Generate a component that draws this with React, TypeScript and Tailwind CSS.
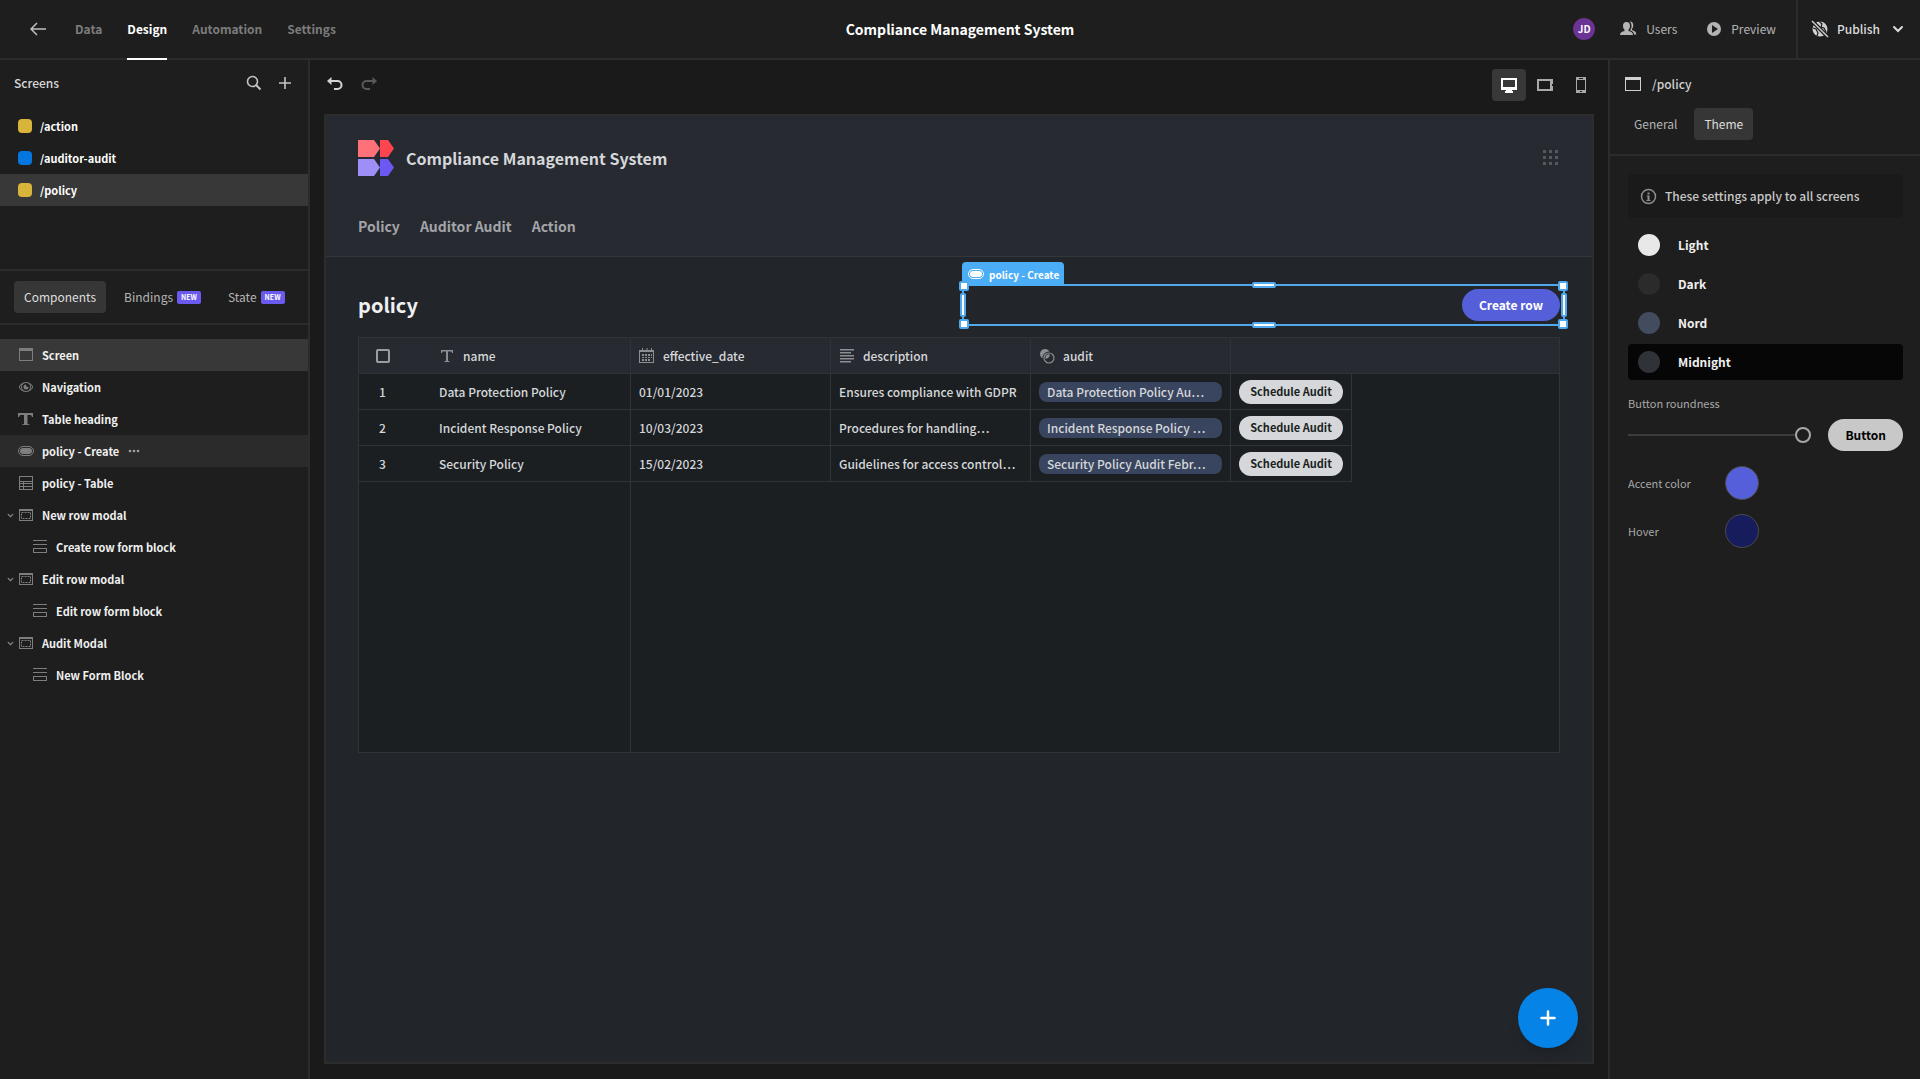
import type { ReactNode } from "react"

const screens = [
  { path: "/action", color: "bg-[#d9b43b]", active: false },
  { path: "/auditor-audit", color: "bg-[#0476e0]", active: false },
  { path: "/policy", color: "bg-[#d9b43b]", active: true },
]

const components = [
  { name: "Screen", icon: "screen", row: "bg-[#383838]" },
  { name: "Navigation", icon: "eye" },
  { name: "Table heading", icon: "text" },
  { name: "policy - Create", icon: "button", row: "bg-[#2b2b2b]", menu: true },
  { name: "policy - Table", icon: "table" },
  { name: "New row modal", icon: "modal", open: true },
  { name: "Create row form block", icon: "form", child: true },
  { name: "Edit row modal", icon: "modal", open: true },
  { name: "Edit row form block", icon: "form", child: true },
  { name: "Audit Modal", icon: "modal", open: true },
  { name: "New Form Block", icon: "form", child: true },
]

const policies = [
  { name: "Data Protection Policy", date: "01/01/2023", description: "Ensures compliance with GDPR", audit: "Data Protection Policy Au…" },
  { name: "Incident Response Policy", date: "10/03/2023", description: "Procedures for handling…", audit: "Incident Response Policy …" },
  { name: "Security Policy", date: "15/02/2023", description: "Guidelines for access control…", audit: "Security Policy Audit Febr…" },
]

const themes = [
  { name: "Light", color: "bg-[#e8e8e8]" },
  { name: "Dark", color: "bg-[#2b2b2b]" },
  { name: "Nord", color: "bg-[#434c5e]" },
  { name: "Midnight", color: "bg-[#2f3237]", active: true },
]

function Svg({ children, className = "", w = 18, h = 18 }: { children: ReactNode; className?: string; w?: number; h?: number }) {
  return (
    <svg width={w} height={h} viewBox={`0 0 ${w} ${h}`} fill="currentColor" className={`shrink-0 ${className}`} aria-hidden="true">
      {children}
    </svg>
  )
}

function TreeIcon({ type }: { type: string }) {
  switch (type) {
    case "screen":
      return (
        <Svg w={16} h={16}>
          <path fillRule="evenodd" d="M1 1h14v13H1zM2 4v9h12V4z" />
        </Svg>
      )
    case "eye":
      return (
        <Svg w={16} h={16}>
          <path fillRule="evenodd" d="M8 3c4 0 7 3.500 7 5s-3 5-7 5-7-3.500-7-5 3-5 7-5zm0 1a4 4 0 1 0 0 8 4 4 0 0 0 0-8zM3.700 5.500C2.500 6.400 2 7.400 2 8s.5 1.600 1.700 2.500a5 5 0 0 1 0-5zm8.600 0a5 5 0 0 1 0 5C13.500 9.600 14 8.600 14 8s-.5-1.600-1.700-2.500z" />
          <path d="M8 5.500a2.500 2.500 0 1 0 2.500 2.500L9 7.800 8.200 7z" />
        </Svg>
      )
    case "text":
      return (
        <Svg w={16} h={16}>
          <path d="M0 2h15v4h-1l-1-2H9.500v9l2 .5V14H4v-.5l2-.5V4H2L1 6H0z" />
        </Svg>
      )
    case "button":
      return (
        <Svg w={16} h={16}>
          <rect x="0.5" y="3.500" width="15" height="9" rx="4.500" fill="none" stroke="currentColor" />
          <rect x="2" y="5" width="12" height="6" rx="3" />
        </Svg>
      )
    case "table":
      return (
        <Svg w={16} h={16}>
          <path fillRule="evenodd" d="M1 1h14v14H1zM2 2v4h12V2zM2 7v1h3V7zM6 7v1h8V7zM2 9v2h3V9zM6 9v2h8V9zM2 12v2h3v-2zM6 12v2h8v-2z" />
        </Svg>
      )
    case "modal":
      return (
        <Svg w={16} h={16}>
          <path fillRule="evenodd" d="M1 2h14v12H1zM2 4v9h12V4z" />
          <rect x="3.500" y="5.500" width="9" height="6" fill="none" stroke="currentColor" strokeDasharray="2 1" />
        </Svg>
      )
    default:
      return (
        <Svg w={16} h={16}>
          <path fillRule="evenodd" d="M1 1h14v1H1zM1 5h14v1H1zM1 9h14v5H1zM2 10v3h12v-3z" />
        </Svg>
      )
  }
}

function Chevron({ className = "size-3" }: { className?: string }) {
  return (
    <svg viewBox="0 0 12 12" fill="none" stroke="currentColor" strokeWidth="2" strokeLinecap="round" className={`shrink-0 ${className}`} aria-hidden="true">
      <path d="M2 4l4 4 4-4" />
    </svg>
  )
}

function TopBar() {
  return (
    <header className="grid h-[60px] shrink-0 grid-cols-[1fr_auto_1fr] border-b-2 border-[#2c2c2c]">
      <nav className="flex items-center gap-[25px] pl-[30px] text-xs font-bold text-[#7c7c7c]">
        <a href="#back" aria-label="Back" className="mr-[3px] text-[#c0c0c0]">
          <Svg w={17} h={16}>
            <path d="M7 2L1 8l6 6M1 8h15" fill="none" stroke="currentColor" strokeWidth="1.500" />
          </Svg>
        </a>
        <a href="#data">Data</a>
        <a href="#design" className="-mb-[2px] flex h-[60px] items-center border-b-2 border-white text-white">Design</a>
        <a href="#automation">Automation</a>
        <a href="#settings">Settings</a>
      </nav>
      <h1 className="self-center text-sm font-bold text-white">Compliance Management System</h1>
      <div className="flex items-center justify-end text-xs text-[#b4b4b4]">
        <span className="mr-[25px] flex size-[22px] items-center justify-center rounded-full bg-[#6a3394] text-[10px] font-bold text-white">JD</span>
        <button className="mr-[29px] flex items-center gap-[9px]">
          <Svg w={17} h={16}>
            <path d="M6.500 1c2.300 0 3.500 1.600 3.500 4 0 1.700-.7 3-1.500 3.800v1.200c2.600.6 4.500 1.600 4.500 4H0c0-2.400 1.900-3.400 4.500-4V8.800C3.700 8 3 6.700 3 5c0-2.400 1.200-4 3.500-4z" />
            <path d="M10 .5c2 0 3.300 1.500 3.300 4 0 1.500-.6 2.800-1.300 3.500V9c2.500.8 4.300 1.900 4.300 4.500H14c-.2-2.300-1.800-3.500-4-4.200 1-1.300 1.500-2.700 1.500-4.300 0-1.800-.5-3.300-1.800-4.500z" />
          </Svg>
          Users
        </button>
        <button className="mr-5 flex items-center gap-[9px]">
          <Svg w={16} h={16}>
            <path fillRule="evenodd" d="M8 1a7 7 0 1 1 0 14A7 7 0 0 1 8 1zM6 4v8l6-4z" />
          </Svg>
          Preview
        </button>
        <button className="flex h-[58px] items-center gap-2 border-l-2 border-[#2c2c2c] pr-4 pl-[13px] font-medium text-[#dcdcdc]">
          <Svg w={18} h={18}>
            <circle cx="9" cy="9" r="7.500" fill="#d0d0d0" />
            <path d="M8 1l3 3-1 3 3 1 2 4M2 8l3 1 2 4-1 3" fill="none" stroke="#1e1e1e" strokeWidth="1.200" />
            <path d="M1 1l16 16" stroke="#1e1e1e" strokeWidth="4" />
            <path d="M1 1l16 16" stroke="#d0d0d0" strokeWidth="1.500" />
          </Svg>
          Publish
          <Chevron className="ml-1 size-3" />
        </button>
      </div>
    </header>
  )
}

function NewBadge() {
  return <span className="rounded-xs bg-[#6a5af0] px-1 text-[7px] leading-[13px] font-bold text-white">NEW</span>
}

function LeftPanel() {
  return (
    <aside className="w-[310px] shrink-0 border-r-2 border-[#2c2c2c]">
      <div className="flex h-[46px] items-center pr-4 pl-[14px] text-[#c4c4c4]">
        <h2 className="grow text-xs font-medium text-[#d8d8d8]">Screens</h2>
        <button aria-label="Search screens" className="mr-4">
          <Svg w={16} h={16}>
            <path d="M10 10l4.500 4.500" stroke="currentColor" strokeWidth="2" />
            <circle cx="6.500" cy="6.500" r="5" fill="none" stroke="currentColor" strokeWidth="1.600" />
          </Svg>
        </button>
        <button aria-label="Add screen">
          <Svg w={14} h={14}>
            <path d="M7 1v12M1 7h12" stroke="currentColor" strokeWidth="1.600" />
          </Svg>
        </button>
      </div>
      <ul className="mt-1 h-[159px] text-[11px] font-semibold text-white">
        {screens.map((s) => (
          <li key={s.path} className={s.active ? "bg-[#383838]" : ""}>
            <a href={s.path} className="flex h-8 items-center gap-2 pl-[18px]">
              <span className={`size-[14px] rounded-[4px] ${s.color}`} />
              {s.path}
            </a>
          </li>
        ))}
      </ul>
      <div className="flex h-[56px] items-center border-y-2 border-[#2c2c2c] pl-[14px] text-xs text-[#b4b4b4]">
        <button className="mr-[18px] h-8 rounded-sm bg-[#363636] px-[10px] text-[#dedede]">Components</button>
        <button className="mr-[27px] flex items-center gap-1">
          Bindings <NewBadge />
        </button>
        <button className="flex items-center gap-1">
          State <NewBadge />
        </button>
      </div>
      <ul className="mt-[14px] text-[11px] font-semibold text-[#f0f0f0]">
        {components.map((c) => (
          <li key={c.name} className={`flex h-8 items-center gap-2 ${c.row ?? ""} ${c.child ? "pl-8" : "pl-[18px]"}`}>
            {c.open && <Chevron className="-mr-1 -ml-[11px] size-[7px] text-[#8c8c8c]" />}
            <span className="text-[#7e7e7e]">
              <TreeIcon type={c.icon} />
            </span>
            {c.name}
            {c.menu && (
              <button aria-label="More actions" className="text-[#a0a0a0]">
                <Svg w={14} h={4}>
                  <circle cx="3" cy="2" r="1.300" />
                  <circle cx="7" cy="2" r="1.300" />
                  <circle cx="11" cy="2" r="1.300" />
                </Svg>
              </button>
            )}
          </li>
        ))}
      </ul>
    </aside>
  )
}

function Toolbar() {
  return (
    <div className="mb-1 flex h-[50px] items-center pr-[9px] pl-4 text-[#a8a8a8]">
      <button aria-label="Undo" className="mr-4 text-[#d4d4d4]">
        <Svg>
          <path d="M4 5h7.500a4 4 0 0 1 0 8H8" fill="none" stroke="currentColor" strokeWidth="2" />
          <path d="M5.500 1v8L1 5z" />
        </Svg>
      </button>
      <button aria-label="Redo" className="text-[#585858]">
        <Svg>
          <path d="M14 5H6.500a4 4 0 0 0 0 8H10" fill="none" stroke="currentColor" strokeWidth="2" />
          <path d="M12.500 1v8L17 5z" />
        </Svg>
      </button>
      <button aria-label="Desktop" className="mr-px ml-auto flex h-8 w-[34px] items-center justify-center rounded-sm bg-[#383838] text-white">
        <Svg>
          <path fillRule="evenodd" d="M1 2h16v12h-5v1h1v2H5v-2h1v-1H1zM3 4v7h12V4z" />
        </Svg>
      </button>
      <button aria-label="Tablet" className="flex h-8 w-9 items-center justify-center">
        <Svg>
          <path fillRule="evenodd" d="M1 3h16v5h-1v2h1v5H1zM3 5v8h11V5z" />
        </Svg>
      </button>
      <button aria-label="Phone" className="flex h-8 w-9 items-center justify-center">
        <Svg>
          <path fillRule="evenodd" d="M4 1h10v16H4zM5 4v10h8V4zM7 2v1h4V2zM8 15v1h2v-1z" />
        </Svg>
      </button>
    </div>
  )
}

function Logo() {
  return (
    <Svg w={36} h={36}>
      <path d="M0 0h16l6 8.500-6 8.500H0z" fill="#ff7178" />
      <path d="M22 0h8l6 8.500-6 8.500h-8z" fill="#ff4550" />
      <path d="M0 19h16l6 8.500-6 8.500H0z" fill="#9d8ff5" />
      <path d="M22 19h8l6 8.500-6 8.500h-8z" fill="#6c58f3" />
    </Svg>
  )
}

function Selection() {
  const corner = "absolute size-[10px] rounded-xs border-2 border-[#4fa9ec] bg-white"
  const bar = "absolute rounded-xs border-2 border-[#4fa9ec] bg-white"
  return (
    <div className="pointer-events-none absolute -top-[5px] -right-[5px] -bottom-[5px] left-[3px] border-2 border-[#4fa9ec]">
      <div className="absolute -top-6 -left-[2px] flex h-6 items-center gap-[5px] rounded-t-sm bg-[#4aadf5] pr-[5px] pl-[6px] text-[10px] font-bold text-white">
        <TreeIcon type="button" />
        policy - Create
      </div>
      <span className={`${corner} -top-[5px] -left-[5px]`} />
      <span className={`${corner} -top-[5px] -right-[5px]`} />
      <span className={`${corner} -bottom-[5px] -left-[5px]`} />
      <span className={`${corner} -right-[5px] -bottom-[5px]`} />
      <span className={`${bar} -top-1 left-1/2 h-[6px] w-6 -translate-x-1/2`} />
      <span className={`${bar} -bottom-1 left-1/2 h-[6px] w-6 -translate-x-1/2`} />
      <span className={`${bar} top-[7px] bottom-[7px] -left-1 w-[6px]`} />
      <span className={`${bar} top-[7px] -right-1 bottom-[7px] w-[6px]`} />
    </div>
  )
}

function HeaderCell({ label, children }: { label: string; children: ReactNode }) {
  return (
    <th className="border-r border-b border-[#303338] px-2 font-medium">
      <span className="flex items-center gap-2">
        <span className="text-[#8b8e93]">{children}</span>
        {label}
      </span>
    </th>
  )
}

function PolicyTable() {
  const cell = "overflow-hidden border-r border-b border-[#303338] px-2 whitespace-nowrap"
  return (
    <div className="mt-4 border border-[#303338] bg-[#1b1f21]">
      <table className="h-[414px] w-full table-fixed border-separate border-spacing-0 text-left text-xs font-medium text-[#d5d7da]">
        <colgroup>
          <col className="w-[72px]" />
          <col className="w-[200px]" />
          <col className="w-[200px]" />
          <col className="w-[200px]" />
          <col className="w-[200px]" />
          <col className="w-[121px]" />
          <col />
        </colgroup>
        <thead>
          <tr className="h-9 bg-[#272a31]">
            <th className="border-b border-[#303338] pl-[17px]">
              <input type="checkbox" aria-label="Select all rows" className="block size-[14px] appearance-none rounded-xs border-2 border-[#9a9da1]" />
            </th>
            <HeaderCell label="name">
              <Svg w={16} h={16}>
                <path d="M2 2h12v3h-1l-.5-1.500H9V13h1.500v1h-5v-1H7V3.500H3.500L3 5H2z" />
              </Svg>
            </HeaderCell>
            <HeaderCell label="effective_date">
              <Svg w={16} h={16}>
                <path fillRule="evenodd" d="M0 2h3V0h1v2h3.500V0h1v2H12V0h1v2h2v13H0zM1 4v10h13V4z" />
                <path d="M3 6h2v2H3zM6 6h2v2H6zM9 6h2v2H9zM12 6h1v2h-1zM3 9h2v1H3zM6 9h2v1H6zM9 9h2v1H9zM12 9h1v1h-1zM3 11h2v2H3zM6 11h2v2H6zM9 11h2v2H9z" />
              </Svg>
            </HeaderCell>
            <HeaderCell label="description">
              <Svg w={16} h={16}>
                <path d="M1 1h14v1.500H1zM1 4h11v1.500H1zM1 7h14v1.500H1zM1 10h14v1.500H1zM1 13h11v1.500H1z" />
              </Svg>
            </HeaderCell>
            <HeaderCell label="audit">
              <Svg w={16} h={16}>
                <circle cx="6" cy="6" r="5" />
                <circle cx="10" cy="10" r="5" fill="none" stroke="#272a31" strokeWidth="3" />
                <circle cx="10" cy="10" r="5" fill="none" stroke="currentColor" strokeWidth="1.200" />
                <path d="M6.500 9.500a5 5 0 0 1 3.500-3.500 5 5 0 0 1-3.500 3.500z" />
              </Svg>
            </HeaderCell>
            <td colSpan={2} className="border-b border-[#303338]" />
          </tr>
        </thead>
        <tbody>
          {policies.map((p, i) => (
            <tr key={p.name} className="h-9">
              <td className="border-b border-[#303338] pl-5">{i + 1}</td>
              <td className={cell}>{p.name}</td>
              <td className={cell}>{p.date}</td>
              <td className={cell}>{p.description}</td>
              <td className={cell}>
                <span className="block overflow-hidden rounded-lg bg-[#39455e] px-2 leading-5">{p.audit}</span>
              </td>
              <td className={cell}>
                <button className="block h-6 w-full rounded-full bg-[#d5d7da] text-[11px] font-bold text-[#1b1f21]">Schedule Audit</button>
              </td>
              <td />
            </tr>
          ))}
          <tr>
            <td colSpan={2} className="border-r border-[#303338]" />
            <td colSpan={5} />
          </tr>
        </tbody>
      </table>
    </div>
  )
}

function Canvas() {
  return (
    <main className="flex min-w-0 grow flex-col bg-[#1a1a1a]">
      <Toolbar />
      <div className="relative mx-[14px] mb-[15px] grow border-2 border-[#2c2c2c] bg-[#22252a]">
        <div className="border-b border-[#33363c] bg-[#272a31] px-8 pt-6">
          <div className="flex h-9 items-center gap-3">
            <Logo />
            <h2 className="grow text-base font-bold text-[#d5d7da]">Compliance Management System</h2>
            <button aria-label="Apps" className="text-[#55585d]">
              <Svg>
                <path d="M1 1h3v3H1zM7 1h3v3H7zM13 1h3v3h-3zM1 7h3v3H1zM7 7h3v3H7zM13 7h3v3h-3zM1 13h3v3H1zM7 13h3v3H7zM13 13h3v3h-3z" />
              </Svg>
            </button>
          </div>
          <nav className="mt-[38px] flex h-[42px] gap-5 text-sm leading-6 font-bold text-[#a2a4a8]">
            <a href="#policy">Policy</a>
            <a href="#auditor-audit">Auditor Audit</a>
            <a href="#action">Action</a>
          </nav>
        </div>
        <div className="px-8 pt-8">
          <div className="flex items-center">
            <h3 className="w-1/2 text-xl leading-8 font-bold text-[#eff0f2]">policy</h3>
            <div className="relative flex w-1/2 justify-end">
              <button className="h-8 rounded-full bg-[#555fd9] px-[17px] text-xs font-bold text-white">Create row</button>
              <Selection />
            </div>
          </div>
          <PolicyTable />
        </div>
        <button aria-label="Add component" className="absolute right-[14px] bottom-[14px] flex size-[60px] items-center justify-center rounded-full bg-[#0583e6] text-white shadow-lg">
          <Svg w={16} h={16}>
            <path d="M8 1.500v13M1.500 8h13" stroke="currentColor" strokeWidth="2.500" strokeLinecap="round" />
          </Svg>
        </button>
      </div>
    </main>
  )
}

function RightPanel() {
  return (
    <aside className="w-[312px] shrink-0 border-l-2 border-[#2c2c2c]">
      <div className="border-b-2 border-[#2c2c2c] px-[14px] pt-3 pb-[14px]">
        <div className="flex h-6 items-center gap-[10px] text-xs font-medium text-[#d0d0d0]">
          <Svg>
            <path fillRule="evenodd" d="M1 2h16v14H1zM2 5v10h14V5z" />
          </Svg>
          /policy
        </div>
        <div className="mt-3 flex gap-[7px] text-xs text-[#b4b4b4]">
          <button className="h-8 px-[10px]">General</button>
          <button className="h-8 rounded-sm bg-[#363636] px-[10px] text-[#dedede]">Theme</button>
        </div>
      </div>
      <div className="pt-[18px] pr-[17px] pl-[18px]">
        <p className="mb-[9px] flex h-[44px] items-center gap-2 rounded-sm bg-[#1a1a1a] pl-3 text-xs font-medium text-[#c8c8c8]">
          <Svg w={17} h={17} className="text-[#8e8e8e]">
            <circle cx="8.500" cy="8.500" r="7" fill="none" stroke="currentColor" strokeWidth="1.500" />
            <path d="M7.500 4.500h2v2h-2zM6.800 7.500h2.700V12h1v1h-4v-1h1V8.500h-.7z" />
          </Svg>
          These settings apply to all screens
        </p>
        <div className="flex flex-col gap-[3px]">
          {themes.map((t) => (
            <button
              key={t.name}
              className={`flex h-9 items-center gap-[18px] rounded-sm pl-[10px] text-xs font-bold text-[#f0f0f0] ${t.active ? "bg-[#060606]" : ""}`}
            >
              <span className={`size-[22px] rounded-full ${t.color}`} />
              {t.name}
            </button>
          ))}
        </div>
        <label htmlFor="roundness" className="mt-[15px] block text-[11px] leading-4 text-[#a8a8a8]">
          Button roundness
        </label>
        <div className="mt-2 flex items-center gap-[17px]">
          <input
            id="roundness"
            type="range"
            min={0}
            max={16}
            defaultValue={16}
            className="h-4 min-w-0 grow appearance-none bg-transparent [&::-webkit-slider-runnable-track]:h-[2px] [&::-webkit-slider-runnable-track]:bg-[#3c3c3c] [&::-webkit-slider-thumb]:-mt-[7px] [&::-webkit-slider-thumb]:size-4 [&::-webkit-slider-thumb]:appearance-none [&::-webkit-slider-thumb]:rounded-full [&::-webkit-slider-thumb]:border-2 [&::-webkit-slider-thumb]:border-[#a8a8a8] [&::-webkit-slider-thumb]:bg-[#1e1e1e]"
          />
          <button className="h-8 rounded-full bg-[#c8c8c8] px-[17px] text-xs font-bold text-black">Button</button>
        </div>
        <div className="mt-[14px] flex h-9 items-center text-[11px] text-[#a8a8a8]">
          <span className="w-[97px]">Accent color</span>
          <button aria-label="Accent color" className="size-[34px] rounded-full border border-[#4a4a4a] bg-[#555fd9]" />
        </div>
        <div className="mt-3 flex h-9 items-center text-[11px] text-[#a8a8a8]">
          <span className="w-[97px]">Hover</span>
          <button aria-label="Hover color" className="size-[34px] rounded-full border border-[#4a4a4a] bg-[#171c5c]" />
        </div>
      </div>
    </aside>
  )
}

export default function App() {
  return (
    <div className="flex min-h-screen flex-col bg-[#1e1e1e] font-['Noto_Sans_CJK_SC',sans-serif]">
      <TopBar />
      <div className="flex grow">
        <LeftPanel />
        <Canvas />
        <RightPanel />
      </div>
    </div>
  )
}
